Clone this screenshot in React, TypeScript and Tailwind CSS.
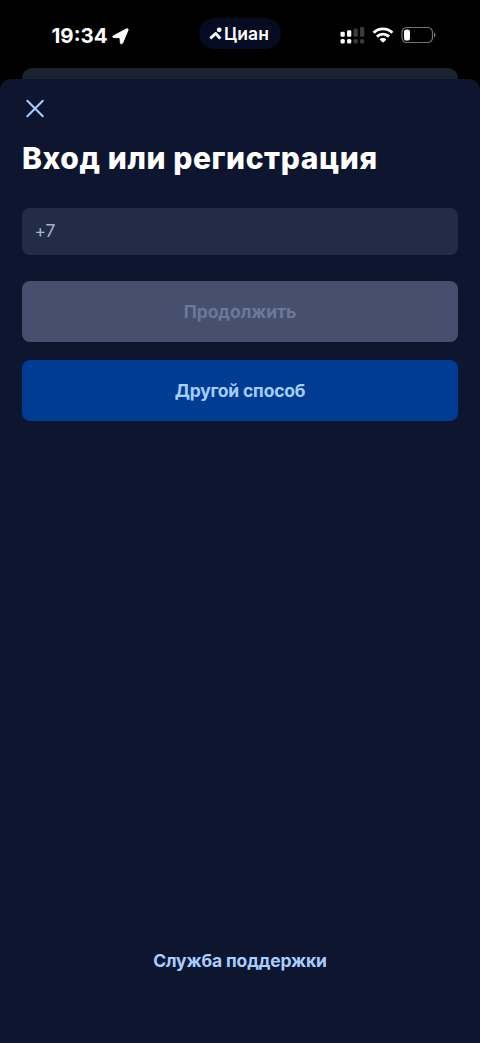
import React from "react";

function StatusBar() {
  return (
    <header className="flex h-[68px] shrink-0 items-start bg-black text-white">
      <div className="flex w-[199px] items-center pl-[51.5px] pt-[22px]">
        <span className="w-[57.5px] whitespace-nowrap text-[20.5px] font-bold leading-7">19:34</span>
        <svg className="ml-[3px] h-[17px] w-[17px]" viewBox="0 0 17 17" fill="#fff" stroke="#fff" strokeWidth="1" strokeLinejoin="round">
          <path d="M1.2 8 14.6 .9c1-.5 1.8.2 1.4 1.2L10.6 15.1c-.4 1-2.1.9-2.2-.2L8 9.6 2 9.6C.8 9.6.3 8.6 1.2 8Z" />
        </svg>
      </div>
      <div className="mt-[18px] flex h-[31px] w-[82px] shrink-0 items-center rounded-full bg-[#050b22] pl-[10px]">
        <svg className="h-[14px] w-[14px] shrink-0" viewBox="0 0 14 14" fill="none">
          <circle cx="10.2" cy="2.8" r="2.4" fill="#fff" />
          <path d="M1.3 11.4 7.3 6M6 5.6l5.3 6" stroke="#fff" strokeWidth="2.9" />
        </svg>
        <span className="ml-px text-[17.5px] font-semibold leading-6 tracking-[0.1px]">Циан</span>
      </div>
      <div className="flex items-center pl-[59px] pt-[26px]">
        <svg className="h-[18px] w-[25px]" viewBox="0 0 25 18">
          <g fill="#fff">
            <rect x="0.5" y="5.8" width="4.3" height="5" rx="1.2" />
            <rect x="0.5" y="13" width="4.3" height="4.4" rx="1.5" />
            <rect x="7" y="4.2" width="4.3" height="6.6" rx="1.2" />
            <rect x="7" y="13" width="4.3" height="4.4" rx="1.5" />
          </g>
          <g fill="#3a3a3a">
            <rect x="13.5" y="2.6" width="4.3" height="8.2" rx="1.2" />
            <rect x="13.5" y="13" width="4.3" height="4.4" rx="1.5" />
            <rect x="20" y="1" width="4.3" height="9.8" rx="1.2" />
            <rect x="20" y="13" width="4.3" height="4.4" rx="1.5" />
          </g>
        </svg>
        <svg className="ml-[7px] h-[18px] w-[22px]" viewBox="0 0 22 18" fill="none" stroke="#fff" strokeWidth="2.9">
          <path d="M1.6 6.7a13.4 13.4 0 0 1 18.8 0M5 10.6a8.6 8.6 0 0 1 12 0" />
          <path d="M11 16.7 7.6 13.4a4.8 4.8 0 0 1 6.8 0Z" fill="#fff" stroke="none" />
        </svg>
        <svg className="ml-[7px] h-[18px] w-[35px]" viewBox="0 0 35 18">
          <rect x="1" y="1.5" width="30.5" height="15" rx="4.8" fill="none" stroke="#737373" strokeWidth="1.2" />
          <rect x="3" y="3.5" width="6" height="11" rx="2.6" fill="#fff" />
          <path d="M33 6.5c2 .8 2 4.2 0 5Z" fill="#737373" />
        </svg>
      </div>
    </header>
  );
}

export default function App() {
  return (
    <main className="flex h-[1043px] w-[480px] flex-col overflow-hidden bg-black font-['Inter','Noto_Sans',sans-serif]">
      <StatusBar />
      <div className="mx-[22px] h-[11px] shrink-0 rounded-t-[10px] bg-[#1c2230]" />
      <section className="flex flex-1 flex-col rounded-t-[11px] bg-[#0d152f] px-[22px]">
        <button aria-label="Закрыть" className="mt-[20px] h-[19px] w-[26px]">
          <svg className="h-[19px] w-[26px]" viewBox="0 0 26 19" fill="none">
            <path d="M5.3 1.8 20.8 17.3M20.8 1.8 5.3 17.3" stroke="#a6ceff" strokeWidth="2" strokeLinecap="round" />
          </svg>
        </button>
        <h1 className="mt-[20px] h-[40px] whitespace-nowrap text-[30px] font-extrabold leading-[40px] tracking-[0.58px] text-white">Вход или регистрация</h1>
        <input
          aria-label="Телефон"
          placeholder="+7"
          className="mt-[29.5px] h-[47px] w-full shrink-0 rounded-lg bg-[#232c46] px-[12.5px] pb-[2px] text-[17.5px] tracking-[-0.3px] text-[#a9b2ca] outline-none placeholder:text-[#a9b2ca]"
        />
        <button disabled className="mt-[26.5px] h-[61px] w-full shrink-0 rounded-lg bg-[#464f6e] pt-[2px] text-[17.5px] font-bold tracking-[-0.05px] text-[#6c7898]">
          Продолжить
        </button>
        <button className="mt-[18px] h-[60.5px] w-full shrink-0 rounded-lg bg-[#003c92] pt-[2px] text-[17.5px] font-bold tracking-[-0.2px] text-[#a6ceff]">
          Другой способ
        </button>
        <button className="mb-[69px] mt-auto self-center whitespace-nowrap text-[17.5px] font-bold leading-[26px] tracking-[-0.15px] text-[#a6ceff]">
          Служба поддержки
        </button>
      </section>
    </main>
  );
}
